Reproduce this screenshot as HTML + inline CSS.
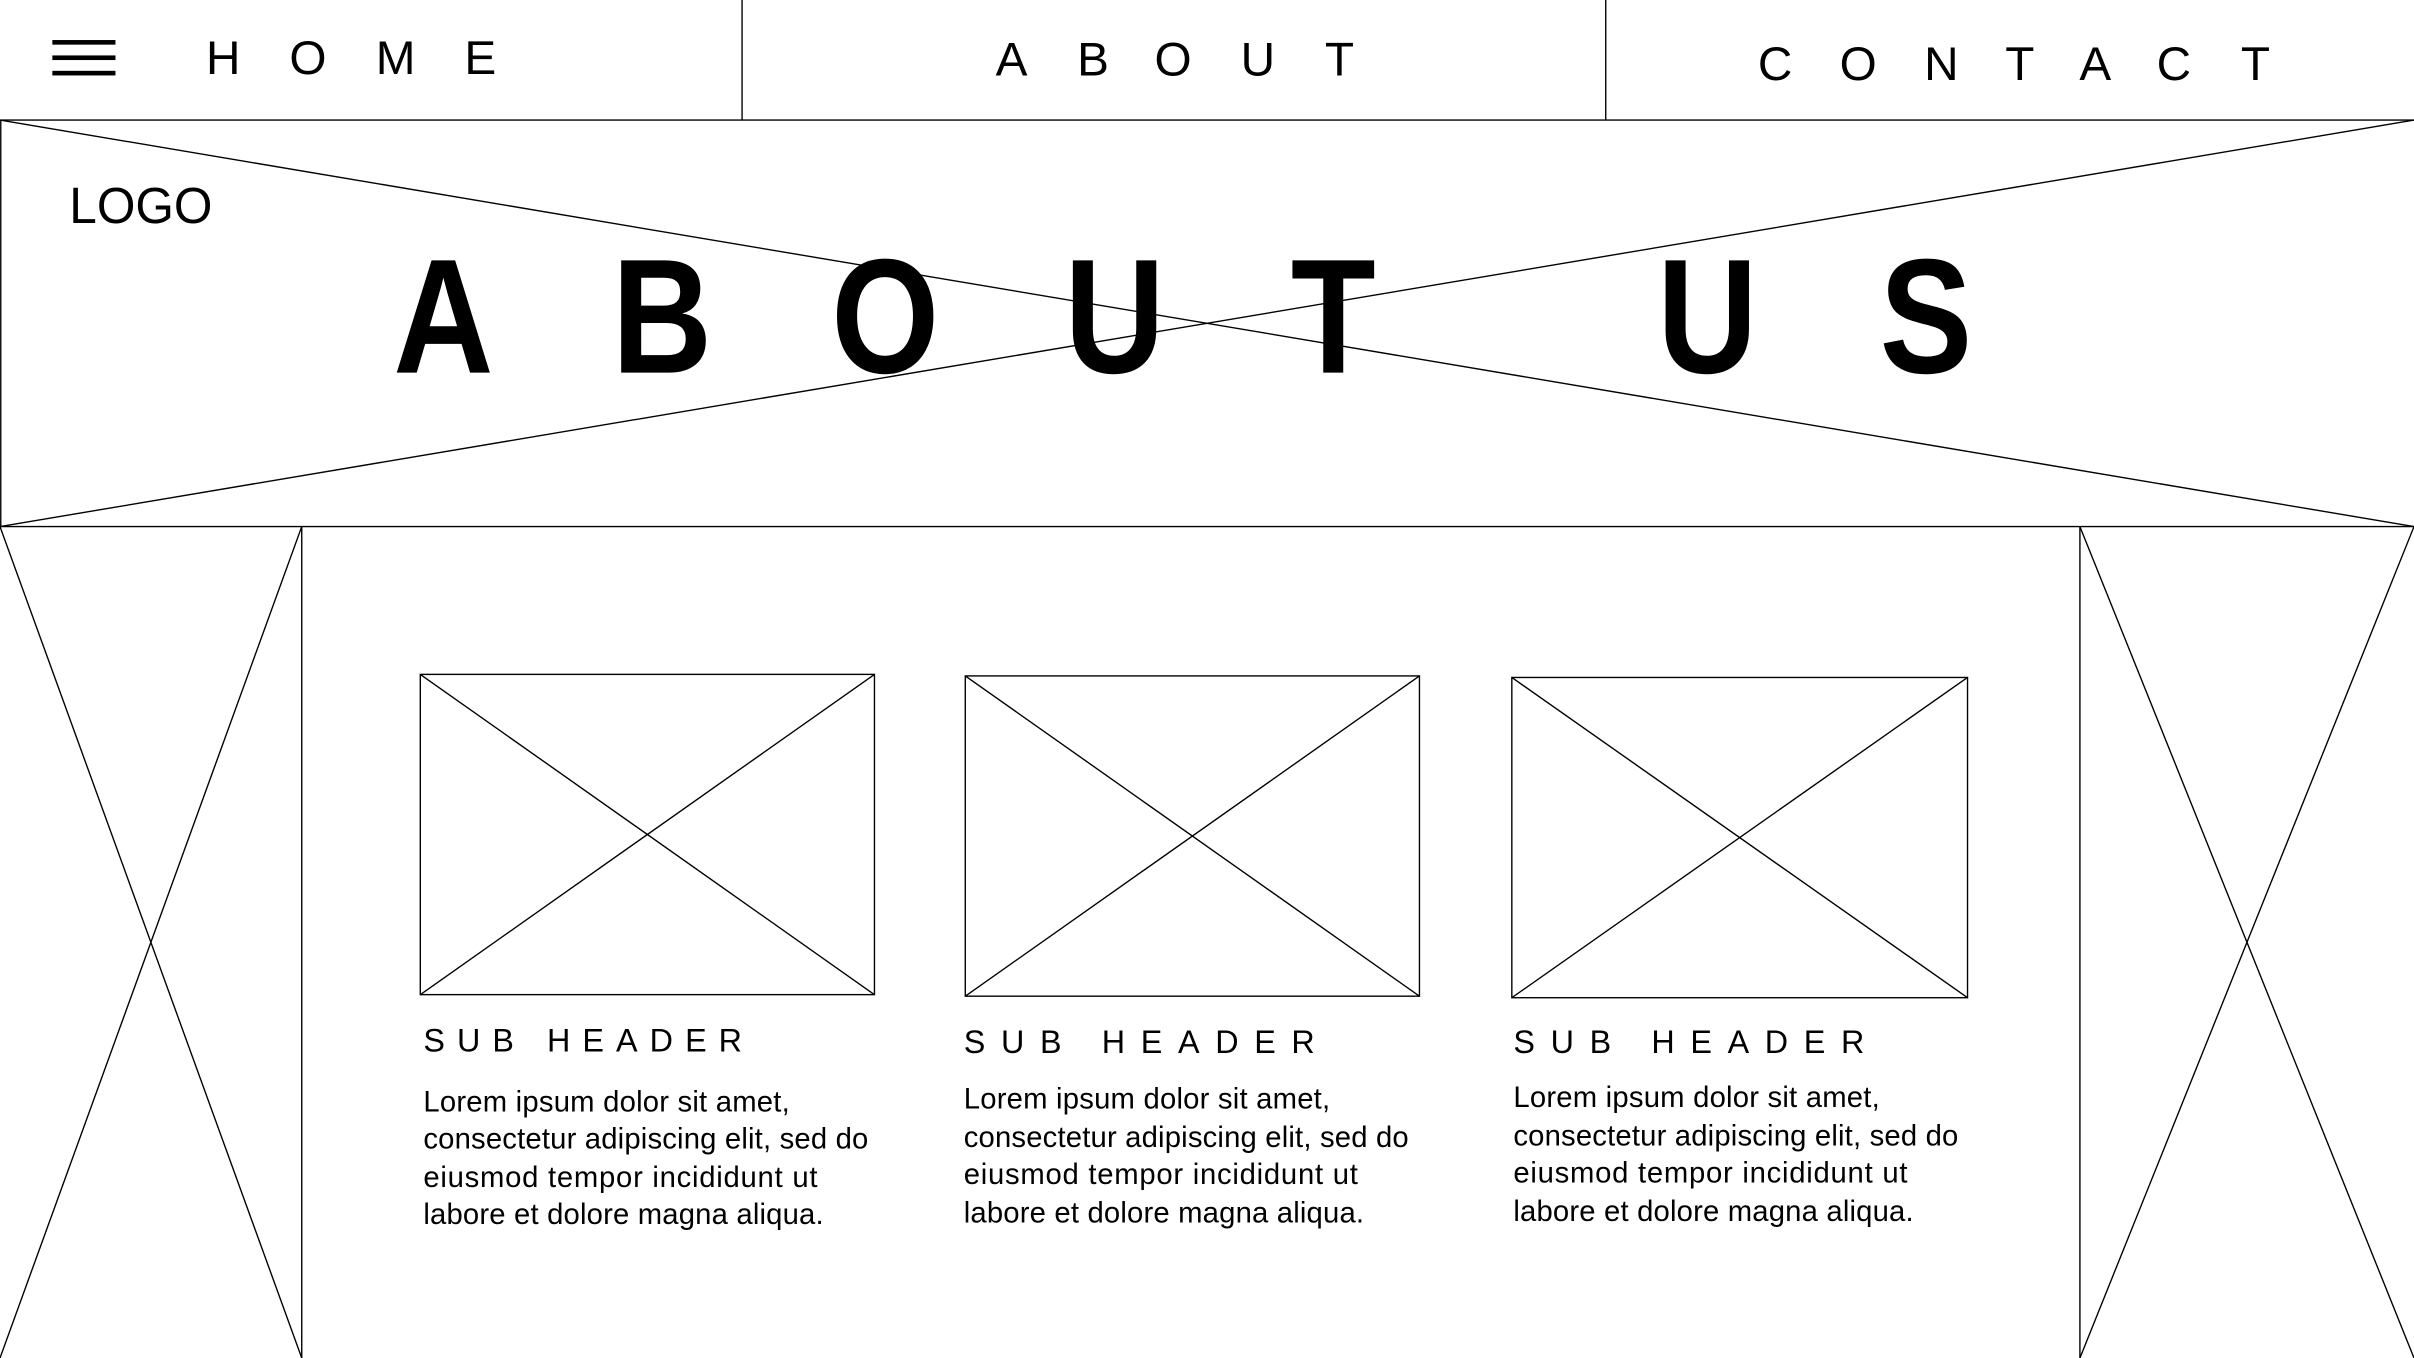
<!DOCTYPE html>
<html><head><meta charset="utf-8"><style>
html,body{margin:0;padding:0;background:#fff;}
svg{display:block;}
text{font-family:"Liberation Sans",sans-serif;fill:#000;}
</style></head><body>
<svg width="2414" height="1358" viewBox="0 0 1568 882" preserveAspectRatio="none" xmlns="http://www.w3.org/2000/svg">
<g stroke="#000" stroke-width="0.9" fill="none">
<line x1="0" y1="78" x2="1568" y2="78"/>
<line x1="482" y1="0" x2="482" y2="78"/>
<line x1="1043" y1="0" x2="1043" y2="78"/>
<line x1="0.5" y1="78" x2="0.5" y2="342"/>
<line x1="0" y1="342" x2="1568" y2="342"/>
<line x1="0" y1="78" x2="1568" y2="342"/>
<line x1="0" y1="342" x2="1568" y2="78"/>
<line x1="196" y1="342" x2="196" y2="882"/>
<line x1="0" y1="342" x2="196" y2="882"/>
<line x1="196" y1="342" x2="0" y2="882"/>
<line x1="1351" y1="342" x2="1351" y2="882"/>
<line x1="1351" y1="342" x2="1568" y2="882"/>
<line x1="1568" y1="342" x2="1351" y2="882"/>
<rect x="273" y="438" width="295" height="208"/>
<line x1="273" y1="438" x2="568" y2="646"/><line x1="568" y1="438" x2="273" y2="646"/>
<rect x="627" y="439" width="295" height="208"/>
<line x1="627" y1="439" x2="922" y2="647"/><line x1="922" y1="439" x2="627" y2="647"/>
<rect x="982" y="440" width="296" height="208"/>
<line x1="982" y1="440" x2="1278" y2="648"/><line x1="1278" y1="440" x2="982" y2="648"/>
</g>
<g fill="#000">
<rect x="34" y="26" width="41" height="3"/>
<rect x="34" y="36" width="41" height="3"/>
<rect x="34" y="46" width="41" height="3"/>
</g>
<g font-size="31" text-anchor="middle">
<text x="145" y="48">H</text><text x="200" y="48">O</text><text x="257" y="48">M</text><text x="312" y="48">E</text>
<text x="657" y="49">A</text><text x="710" y="49">B</text><text x="762" y="49">O</text><text x="817" y="49">U</text><text x="870" y="49">T</text>
<text x="1153" y="52">C</text><text x="1207" y="52">O</text><text x="1261" y="52">N</text><text x="1312" y="52">T</text><text x="1361" y="52">A</text><text x="1412" y="52">C</text><text x="1465" y="52">T</text>
</g>
<text x="45" y="145" font-size="33" textLength="93" lengthAdjust="spacingAndGlyphs">LOGO</text>
<g font-size="106" font-weight="bold" text-anchor="middle">
<text transform="translate(288,242) scale(0.85,1)">A</text>
<text transform="translate(430,242) scale(0.85,1)">B</text>
<text transform="translate(575,242) scale(0.85,1)">O</text>
<text transform="translate(724,242) scale(0.85,1)">U</text>
<text transform="translate(866,242) scale(0.85,1)">T</text>
<text transform="translate(1109,242) scale(0.85,1)">U</text>
<text transform="translate(1251,242) scale(0.85,1)">S</text>
</g>
<g font-size="21">
<text x="275" y="683" textLength="207">SUB  HEADER</text>
<text x="626" y="684" textLength="228">SUB  HEADER</text>
<text x="983" y="684" textLength="228">SUB  HEADER</text>
</g>
<g font-size="19">
<text x="275" y="722" textLength="238">Lorem ipsum dolor sit amet,</text>
<text x="275" y="746" textLength="289">consectetur adipiscing elit, sed do</text>
<text x="275" y="771" textLength="256">eiusmod tempor incididunt ut</text>
<text x="275" y="795" textLength="260">labore et dolore magna aliqua.</text>
<text x="626" y="720" textLength="238">Lorem ipsum dolor sit amet,</text>
<text x="626" y="745" textLength="289">consectetur adipiscing elit, sed do</text>
<text x="626" y="769" textLength="256">eiusmod tempor incididunt ut</text>
<text x="626" y="794" textLength="260">labore et dolore magna aliqua.</text>
<text x="983" y="719" textLength="238">Lorem ipsum dolor sit amet,</text>
<text x="983" y="744" textLength="289">consectetur adipiscing elit, sed do</text>
<text x="983" y="768" textLength="256">eiusmod tempor incididunt ut</text>
<text x="983" y="793" textLength="260">labore et dolore magna aliqua.</text>
</g>
</svg>
</body></html>
